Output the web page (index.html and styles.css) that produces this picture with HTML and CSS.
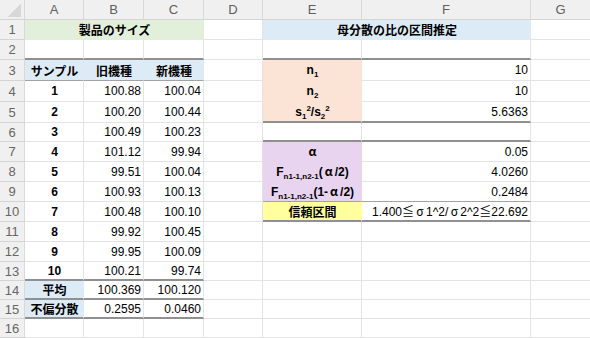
FILE: index.html
```html
<!DOCTYPE html>
<html lang="ja">
<head>
<meta charset="utf-8">
<title>母分散の比の区間推定</title>
<link rel="stylesheet" href="styles.css">
</head>
<body>
<div class="sheet">
  <!-- header row -->
  <div class="hd corner"><div class="tri"></div></div>
  <div class="hd">A</div><div class="hd">B</div><div class="hd">C</div><div class="hd">D</div><div class="hd">E</div><div class="hd">F</div><div class="hd">G</div>

  <!-- row 1 -->
  <div class="rh">1</div>
  <div class="c span3 green b m">製品のサイズ</div>
  <div class="c"></div>
  <div class="c span2 blue b m">母分散の比の区間推定</div>
  <div class="c"></div>

  <!-- row 2 -->
  <div class="rh">2</div>
  <div class="c tb"></div><div class="c tb"></div><div class="c tb"></div>
  <div class="c"></div>
  <div class="c tb"></div><div class="c tb"></div>
  <div class="c"></div>

  <!-- row 3 -->
  <div class="rh">3</div>
  <div class="c blue b m tn">サンプル</div>
  <div class="c blue b m tn">旧機種</div>
  <div class="c blue b m tn">新機種</div>
  <div class="c"></div>
  <div class="c peach b m"><span class="tx">n<sub>1</sub></span></div>
  <div class="c r">10</div>
  <div class="c"></div>

  <!-- row 4 -->
  <div class="rh">4</div>
  <div class="c b m">1</div><div class="c r">100.88</div><div class="c r">100.04</div>
  <div class="c"></div>
  <div class="c peach b m"><span class="tx">n<sub>2</sub></span></div>
  <div class="c r">10</div>
  <div class="c"></div>

  <!-- row 5 -->
  <div class="rh">5</div>
  <div class="c b m">2</div><div class="c r">100.20</div><div class="c r">100.44</div>
  <div class="c"></div>
  <div class="c peach b m tb"><span class="tx">s<sub>1</sub><sup>2</sup>/s<sub>2</sub><sup>2</sup></span></div>
  <div class="c r tb">5.6363</div>
  <div class="c"></div>

  <!-- row 6 -->
  <div class="rh">6</div>
  <div class="c b m">3</div><div class="c r">100.49</div><div class="c r">100.23</div>
  <div class="c"></div>
  <div class="c tb"></div><div class="c tb"></div>
  <div class="c"></div>

  <!-- row 7 -->
  <div class="rh">7</div>
  <div class="c b m">4</div><div class="c r">101.12</div><div class="c r">99.94</div>
  <div class="c"></div>
  <div class="c purple b m"><span class="tx"><span class="gk">α</span></span></div>
  <div class="c r">0.05</div>
  <div class="c"></div>

  <!-- row 8 -->
  <div class="rh">8</div>
  <div class="c b m">5</div><div class="c r">99.51</div><div class="c r">100.04</div>
  <div class="c"></div>
  <div class="c purple b m"><span class="tx">F<sub>n1-1,n2-1</sub>(<span class="gk">α</span>/2)</span></div>
  <div class="c r">4.0260</div>
  <div class="c"></div>

  <!-- row 9 -->
  <div class="rh">9</div>
  <div class="c b m">6</div><div class="c r">100.93</div><div class="c r">100.13</div>
  <div class="c"></div>
  <div class="c purple b m tn"><span class="tx">F<sub>n1-1,n2-1</sub>(1-<span class="gk">α</span>/2)</span></div>
  <div class="c r tn">0.2484</div>
  <div class="c"></div>

  <!-- row 10 -->
  <div class="rh">10</div>
  <div class="c b m">7</div><div class="c r">100.48</div><div class="c r">100.10</div>
  <div class="c"></div>
  <div class="c yellow b m tb">信頼区間</div>
  <div class="c r tb"><span class="tx">1.400≦<span class="gk">σ</span>1^2/<span class="gk">σ</span>2^2≦22.692</span></div>
  <div class="c"></div>

  <!-- row 11 -->
  <div class="rh">11</div>
  <div class="c b m">8</div><div class="c r">99.92</div><div class="c r">100.45</div>
  <div class="c"></div><div class="c"></div><div class="c"></div><div class="c"></div>

  <!-- row 12 -->
  <div class="rh">12</div>
  <div class="c b m">9</div><div class="c r">99.95</div><div class="c r">100.09</div>
  <div class="c"></div><div class="c"></div><div class="c"></div><div class="c"></div>

  <!-- row 13 -->
  <div class="rh">13</div>
  <div class="c b m tb">10</div><div class="c r tb">100.21</div><div class="c r tb">99.74</div>
  <div class="c"></div><div class="c"></div><div class="c"></div><div class="c"></div>

  <!-- row 14 -->
  <div class="rh">14</div>
  <div class="c blue b m tb">平均</div><div class="c r tb">100.369</div><div class="c r tb">100.120</div>
  <div class="c"></div><div class="c"></div><div class="c"></div><div class="c"></div>

  <!-- row 15 -->
  <div class="rh">15</div>
  <div class="c blue b m tb">不偏分散</div><div class="c r tb">0.2595</div><div class="c r tb">0.0460</div>
  <div class="c"></div><div class="c"></div><div class="c"></div><div class="c"></div>

  <!-- row 16 -->
  <div class="rh">16</div>
  <div class="c"></div><div class="c"></div><div class="c"></div>
  <div class="c"></div><div class="c"></div><div class="c"></div><div class="c"></div>
</div>
</body>
</html>
```

FILE: styles.css
```css
html, body {
  margin: 0;
  padding: 0;
  background: #ffffff;
  overflow: hidden;
}

.sheet {
  display: grid;
  grid-template-columns: 25px 59px 60px 60px 59px 99px 169px 60px;
  grid-template-rows: 20px 20px 20px 21px 21px 21px 19px 20px 20px 20px 20px 20px 20px 19px 19px 19px 19px;
  width: 591px;
  font-family: "Liberation Sans", "Noto Sans CJK JP", sans-serif;
  font-size: 12px;
  color: #000;
}

.hd, .rh {
  box-sizing: border-box;
  background: #f0f0f0;
  color: #5f5f5f;
  font-size: 13px;
  display: flex;
  align-items: center;
  justify-content: center;
  border-right: 1px solid #d9d9d9;
  border-bottom: 1px solid #d4d4d4;
}

.corner {
  justify-content: flex-end;
  align-items: flex-end;
  padding: 0 3px 2px 0;
}

.tri {
  width: 14px;
  height: 14px;
  background: linear-gradient(to bottom right, transparent 50%, #d7d7d7 50%);
}

.rh {
  color: #666;
}

.c {
  box-sizing: border-box;
  display: flex;
  align-items: center;
  padding: 0 2px 0 3px;
  white-space: nowrap;
  overflow: hidden;
  border-right: 1px solid #e4e4e4;
  border-bottom: 1px solid #e4e4e4;
}

.tx {
  line-height: 14px;
}

.span3 { grid-column: span 3; }
.span2 { grid-column: span 2; }

.m { justify-content: center; }
.r { justify-content: flex-end; }
.b { font-weight: bold; }

.green  { background: #e2efda; border-right-color: #e2efda; border-bottom-color: #e2efda; }
.blue   { background: #ddebf7; border-right-color: #ddebf7; border-bottom-color: #ddebf7; }
.peach  { background: #fbe4d6; border-right-color: #fbe4d6; border-bottom-color: #fbe4d6; }
.purple { background: #e8d4ef; border-right-color: #e8d4ef; border-bottom-color: #e8d4ef; }
.yellow { background: #ffff9e; border-right-color: #ffff9e; border-bottom-color: #ffff9e; }

.tb { border-bottom: 2px solid #909090; }
.tn { border-bottom: 1px solid #a3a3a3; }

.green.tb, .blue.tb, .peach.tb, .purple.tb, .yellow.tb { border-bottom-color: #909090; }
.blue.tn, .purple.tn { border-bottom-color: #a3a3a3; }

sub, sup {
  font-size: 8px;
  line-height: 0;
}

sub { vertical-align: -3px; }
sup { vertical-align: 5px; }

.gk {
  display: inline-block;
  width: 12px;
  text-align: center;
  font-family: "Noto Sans CJK JP", sans-serif;
  font-weight: normal;
}

.b .gk { font-weight: bold; }
```
